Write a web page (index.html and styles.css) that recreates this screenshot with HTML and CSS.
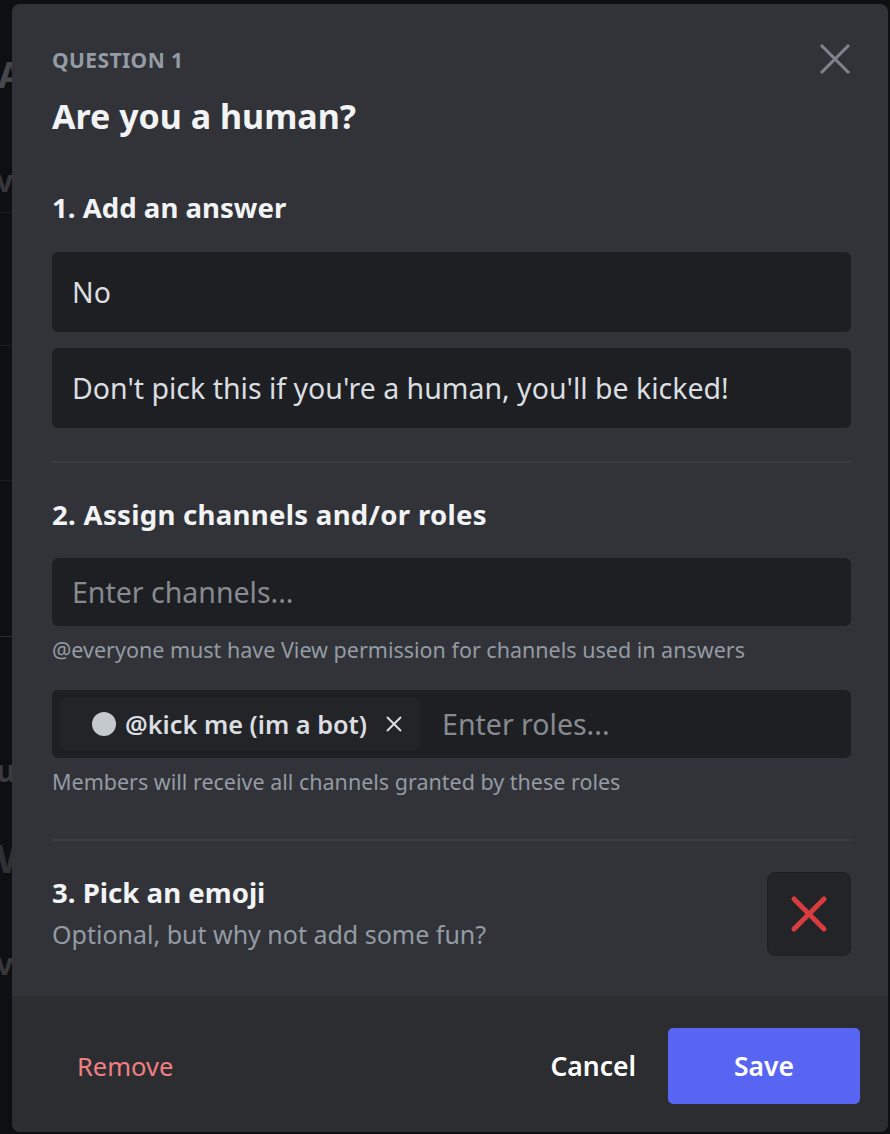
FILE: index.html
```html
<!DOCTYPE html>
<html lang="en">
<head>
<meta charset="utf-8">
<title>Question 1</title>
<link rel="stylesheet" href="styles.css">
</head>
<body>
<div class="backdrop">
  <span class="bg-letter l1">A</span>
  <span class="bg-letter l2">v</span>
  <span class="bg-line b1"></span>
  <span class="bg-line b2"></span>
  <span class="bg-line b3"></span>
  <span class="bg-line b4"></span>
  <span class="bg-letter l3">u</span>
  <span class="bg-letter l4">W</span>
  <span class="bg-letter l5">v</span>
</div>
<div class="modal">
  <div class="modal-body">
    <div class="header">
      <div class="header-text">
        <div class="eyebrow">QUESTION 1</div>
        <h1 class="title">Are you a human?</h1>
      </div>
      <button class="close" aria-label="Close">
        <svg viewBox="0 0 32 32" width="32" height="32"><path d="M2 2 L30 30 M30 2 L2 30" stroke="#80848e" stroke-width="3" fill="none"/></svg>
      </button>
    </div>

    <section class="section">
      <h2 class="heading">1. Add an answer</h2>
      <div class="field tall first">No</div>
      <div class="field tall">Don't pick this if you're a human, you'll be kicked!</div>
    </section>

    <div class="divider"></div>

    <section class="section">
      <h2 class="heading h-wide">2. Assign channels and/or roles</h2>
      <div class="field short first"><span class="placeholder">Enter channels...</span></div>
      <p class="hint">@everyone must have View permission for channels used in answers</p>
      <div class="field short roles">
        <span class="chip">
          <span class="chip-dot"></span>
          <span class="chip-name">@kick me (im a bot)</span>
          <svg class="chip-x" viewBox="0 0 18 18" width="18" height="18"><path d="M2 2 L16 16 M16 2 L2 16" stroke="#dbdee1" stroke-width="2" fill="none"/></svg>
        </span>
        <span class="placeholder">Enter roles...</span>
      </div>
      <p class="hint">Members will receive all channels granted by these roles</p>
    </section>

    <div class="divider second"></div>

    <section class="emoji-row">
      <div class="emoji-text">
        <h2 class="heading">3. Pick an emoji</h2>
        <p class="sub">Optional, but why not add some fun?</p>
      </div>
      <button class="emoji-btn" aria-label="Pick an emoji">
        <svg viewBox="0 0 84 84" width="84" height="84"><path d="M27 27 L57 57 M57 27 L27 57" stroke="#d83c3e" stroke-width="5" stroke-linecap="round" fill="none"/></svg>
      </button>
    </section>
  </div>

  <div class="footer">
    <button class="btn-remove">Remove</button>
    <div class="spacer"></div>
    <button class="btn-cancel">Cancel</button>
    <button class="btn-save">Save</button>
  </div>
</div>
</body>
</html>
```

FILE: styles.css
```css
* { box-sizing: border-box; }

html, body {
  margin: 0;
  padding: 0;
  height: 100%;
}

body {
  background: #0e0f11;
  font-family: "Noto Sans", "Open Sans", "DejaVu Sans", sans-serif;
  position: relative;
  overflow: hidden;
}

.backdrop {
  position: absolute;
  inset: 0;
  z-index: 0;
}

.bg-letter {
  position: absolute;
  left: -4px;
  color: #3a3c41;
  font-size: 30px;
  font-weight: 700;
}
.l1 { top: 50px; left: -2px; font-size: 36px; color: #45474c; }
.l2 { top: 160px; color: #35373b; }
.l3 { top: 750px; color: #393b40; }
.l4 { top: 830px; font-size: 40px; color: #2e3034; }
.l5 { top: 943px; color: #35373b; }

.bg-line {
  position: absolute;
  left: 0;
  width: 12px;
  height: 1px;
  background: #1d1e21;
}
.b1 { top: 212px; }
.b2 { top: 345px; }
.b3 { top: 480px; }
.b4 { top: 636px; background: #2a2b2f; }

.modal {
  position: relative;
  z-index: 1;
  margin: 4px 0 0 12px;
  width: 876px;
  height: 1128px;
  background: #313338;
  border-radius: 8px;
  display: flex;
  flex-direction: column;
  overflow: hidden;
}

.modal-body {
  flex: 1;
  padding: 42px 37px 0 40px;
}

.header {
  display: flex;
  justify-content: space-between;
  align-items: flex-start;
}

.eyebrow {
  color: #949ba4;
  font-size: 21px;
  font-weight: 700;
  line-height: 28px;
  letter-spacing: 0.02em;
}

.title {
  margin: 21px 0 0;
  color: #f2f3f5;
  font-size: 34px;
  font-weight: 700;
  line-height: 43px;
}

.close {
  margin-top: -3px;
  width: 32px;
  height: 32px;
  padding: 0;
  border: 0;
  background: none;
  display: block;
}
.close svg { display: block; }

.section { margin: 0; }

.heading {
  margin: 51px 0 0;
  color: #f2f3f5;
  font-size: 27.6px;
  font-weight: 700;
  line-height: 36px;
}
.heading.h-wide { letter-spacing: 0.01em; }

.divider + .section .heading { margin-top: 33px; }

.field {
  background: #1e1f22;
  border-radius: 6px;
  color: #dbdee1;
  font-size: 28.5px;
  display: flex;
  align-items: center;
  padding: 0 20px;
}
.field.tall { height: 80px; margin-top: 16px; }
.field.tall.first { margin-top: 27px; }
.field.short { height: 68px; }
.field.short.first { margin-top: 26px; }
.field.roles { margin-top: 27px; padding-left: 8px; }

.placeholder { color: #878a90; }

.hint {
  margin: 11px 0 0;
  color: #949ba4;
  font-size: 21.5px;
  line-height: 26px;
}

.divider {
  margin-top: 33px;
  height: 2px;
  background: #3b3d43;
}
.divider.second { margin-top: 44px; }

.chip {
  display: flex;
  align-items: center;
  height: 52px;
  padding: 0 17px 0 32px;
  background: #232428;
  border-radius: 4px;
  margin-right: 22px;
}
.chip-dot {
  width: 24px;
  height: 24px;
  border-radius: 50%;
  background: #c4c9ce;
  margin-right: 9px;
}
.chip-name {
  color: #dbdee1;
  font-weight: 600;
  font-size: 25.3px;
}
.chip-x { margin-left: 18px; display: block; }

.emoji-row {
  margin-top: 31px;
  display: flex;
  justify-content: space-between;
  align-items: flex-start;
}
.emoji-text { padding-top: 2px; }
.emoji-text .heading { margin-top: 0; }

.sub {
  margin: 7px 0 0;
  color: #949ba4;
  font-size: 25px;
  line-height: 34px;
}

.emoji-btn {
  width: 84px;
  height: 84px;
  padding: 0;
  background: #232428;
  border: 1px solid #1e1f22;
  border-radius: 8px;
  display: block;
}
.emoji-btn svg { display: block; margin: -1px; }

.footer {
  height: 136px;
  background: #2b2d31;
  display: flex;
  align-items: center;
  padding: 0 28px 0 40px;
}
.spacer { flex: 1; }

.footer button {
  font-family: inherit;
  font-size: 26.5px;
  border: 0;
  background: none;
  cursor: pointer;
  margin-top: 4px;
}

.footer .btn-remove {
  color: #f07f82;
  font-size: 25.5px;
  padding: 0 25px;
  height: 76px;
}
.btn-cancel {
  color: #ffffff;
  font-weight: 600;
  padding: 0 32px;
  height: 76px;
}
.footer .btn-save {
  width: 192px;
  height: 76px;
  background: #5865f2;
  color: #ffffff;
  font-weight: 600;
  border-radius: 5px;
}
```
